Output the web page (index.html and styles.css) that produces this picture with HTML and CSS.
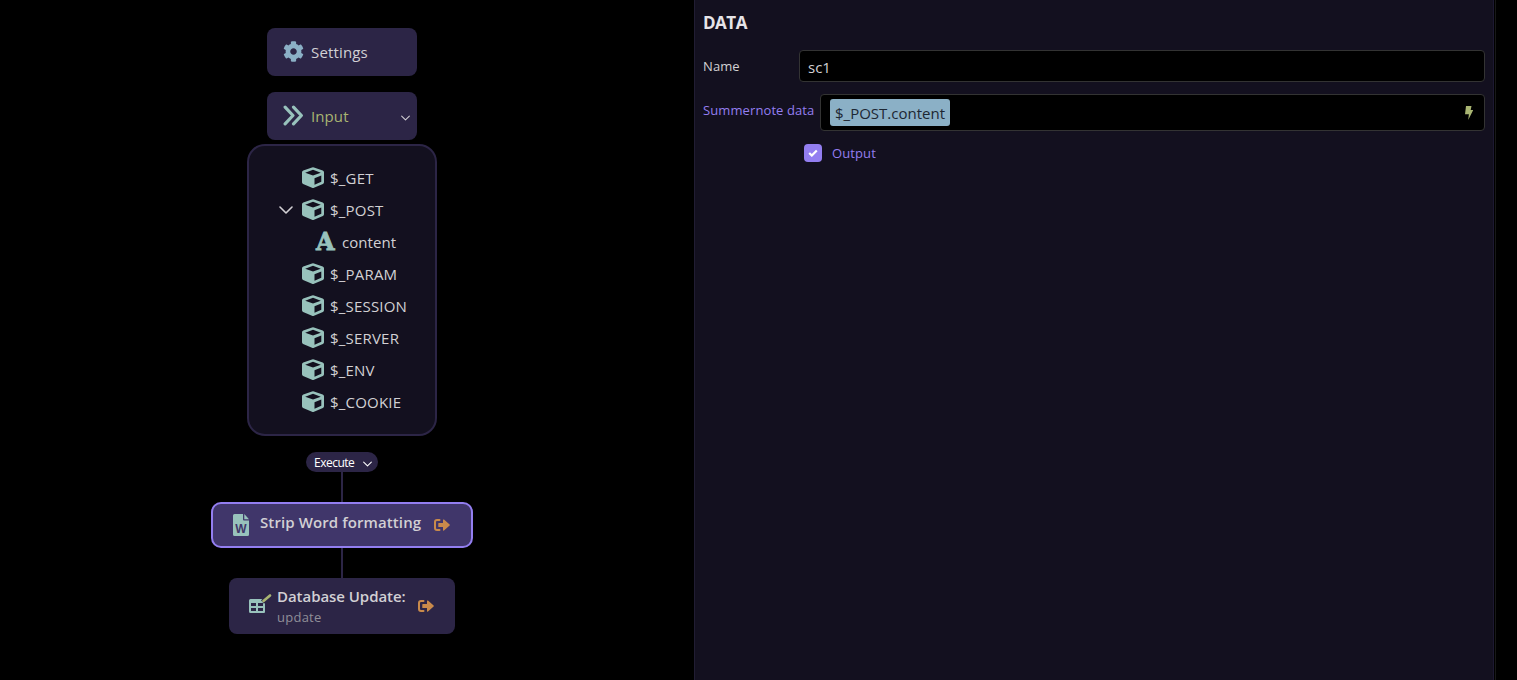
FILE: index.html
```html
<!DOCTYPE html>
<html lang="en">
<head>
  <meta charset="UTF-8">
  <title>Server Action</title>
  <link rel="stylesheet" href="styles.css">
</head>
<body>

<svg class="defs">
  <symbol id="cube" viewBox="0 0 22 22" preserveAspectRatio="none">
    <path fill-rule="evenodd" d="M10 .4Q11 0 12 .4L20.700 3.600Q22 4.100 22 5.400V16Q22 17.200 20.900 17.700L12 21.700Q11 22.100 10 21.700L1.100 17.700Q0 17.200 0 16V5.400Q0 4.100 1.300 3.600ZM11 3L3.200 5.900L11 9L18.800 5.900ZM12.500 11.700V18.500L19.300 15.400V9Z"/>
  </symbol>
  <symbol id="chevron" viewBox="0 0 14 8">
    <path d="M1 1L7 7L13 1" fill="none" stroke="currentColor" stroke-width="1.600" stroke-linecap="round" stroke-linejoin="round"/>
  </symbol>
  <symbol id="output" viewBox="0 0 16 12">
    <path d="M5.500 1H3Q1 1 1 3V9Q1 11 3 11H5.500" fill="none" stroke="currentColor" stroke-width="2" stroke-linecap="round"/>
    <path d="M4.800 4H9V1Q9 0 10 .6L15.600 5.400Q16.200 6 15.600 6.600L10 11.400Q9 12 9 11V8H4.800Q4.300 8 4.300 7.500V4.500Q4.300 4 4.800 4Z"/>
  </symbol>
</svg>

<div class="app">
  <main class="flow">
    <div class="box">
      <svg class="icon cog" viewBox="0 0 512 512"><path d="M487.400 315.700l-42.600-24.600c4.300-23.200 4.300-47 0-70.200l42.600-24.600c4.900-2.800 7.100-8.600 5.500-14-11.100-35.600-30-67.800-54.700-94.600-3.800-4.100-10-5.100-14.800-2.300L380.800 110c-17.900-15.400-38.500-27.300-60.800-35.100V25.800c0-5.600-3.900-10.500-9.400-11.700-36.700-8.200-74.300-7.800-109.200 0-5.500 1.200-9.400 6.100-9.400 11.700V75c-22.200 7.900-42.800 19.800-60.800 35.100L88.700 85.500c-4.900-2.800-11-1.900-14.800 2.300-24.700 26.700-43.600 58.900-54.700 94.600-1.700 5.400.6 11.200 5.500 14L67.300 221c-4.300 23.200-4.300 47 0 70.200l-42.600 24.600c-4.900 2.800-7.100 8.600-5.500 14 11.100 35.600 30 67.800 54.700 94.600 3.800 4.100 10 5.100 14.800 2.300l42.600-24.600c17.900 15.400 38.500 27.300 60.800 35.100v49.200c0 5.600 3.900 10.500 9.400 11.700 36.700 8.200 74.300 7.800 109.200 0 5.500-1.200 9.400-6.100 9.400-11.700v-49.200c22.200-7.900 42.800-19.800 60.800-35.100l42.600 24.600c4.900 2.800 11 1.900 14.800-2.300 24.700-26.700 43.600-58.900 54.700-94.600 1.500-5.500-.7-11.300-5.600-14.100zM256 336c-44.100 0-80-35.900-80-80s35.900-80 80-80 80 35.900 80 80-35.900 80-80 80z"/></svg>
      <span class="settings">Settings</span>
    </div>

    <div class="box input-box">
      <svg class="icon arrows" viewBox="0 0 20 20"><path d="M2 2L9.500 10L2 18M10 2L17.500 10L10 18" fill="none" stroke="currentColor" stroke-width="3" stroke-linecap="round" stroke-linejoin="round"/></svg>
      <span class="input">Input</span>
      <svg class="small-chevron"><use href="#chevron"/></svg>
    </div>

    <ul class="tree">
      <li><svg class="cube"><use href="#cube"/></svg><span>$_GET</span></li>
      <li class="open"><svg class="toggle"><use href="#chevron"/></svg><svg class="cube"><use href="#cube"/></svg><span>$_POST</span></li>
      <li class="child"><b class="type">A</b><span>content</span></li>
      <li><svg class="cube"><use href="#cube"/></svg><span>$_PARAM</span></li>
      <li><svg class="cube"><use href="#cube"/></svg><span>$_SESSION</span></li>
      <li><svg class="cube"><use href="#cube"/></svg><span>$_SERVER</span></li>
      <li><svg class="cube"><use href="#cube"/></svg><span>$_ENV</span></li>
      <li><svg class="cube"><use href="#cube"/></svg><span>$_COOKIE</span></li>
    </ul>

    <div class="execute"><span>Execute</span><svg class="small-chevron"><use href="#chevron"/></svg></div>
    <div class="line"></div>

    <div class="step strip selected">
      <svg class="file" viewBox="0 0 16 22">
        <path d="M1.500 0H10V5.500Q10 6.500 11 6.500H16V20.500Q16 22 14.500 22H1.500Q0 22 0 20.500V1.500Q0 0 1.500 0ZM11.300 0L16 5.200H11.300Z"/>
        <text x="8" y="18.500" text-anchor="middle">W</text>
      </svg>
      <span class="title">Strip Word formatting</span>
      <svg class="output"><use href="#output"/></svg>
    </div>
    <div class="line"></div>

    <div class="step update">
      <svg class="table" viewBox="0 0 23 20">
        <path fill-rule="evenodd" d="M1.500 5H15Q16 5 16 6V18Q16 19 15 19H1.500Q0 19 0 17.500V6.500Q0 5 1.500 5ZM2 9V12H7V9ZM9 9V12H14V9ZM2 14V17H7V14ZM9 14V17H14V14Z"/>
        <path class="pencil-edge" d="M13.500 8L21 1.500"/>
        <path class="pencil" d="M14.500 7L21 1.500"/>
      </svg>
      <div class="text">
        <span class="title">Database Update:</span>
        <span class="sub">update</span>
      </div>
      <svg class="output"><use href="#output"/></svg>
    </div>
  </main>

  <aside class="panel">
    <h2>DATA</h2>
    <div class="row">
      <label>Name</label>
      <div class="field"><span>sc1</span></div>
    </div>
    <div class="row data-row">
      <label class="bound">Summernote data</label>
      <div class="field">
        <span class="tag">$_POST.content</span>
        <svg class="bolt" viewBox="0 0 8 14"><path d="M1 0H6.500L5.700 4H8.300L3.200 14L3.900 8.200H0Z"/></svg>
      </div>
    </div>
    <div class="check-row">
      <span class="check"><svg viewBox="0 0 10 8"><path d="M1.200 4L3.800 6.500L8.800 1.500" fill="none" stroke="#fff" stroke-width="2.200"/></svg></span>
      <span class="check-label">Output</span>
    </div>
  </aside>
  <div class="edge"></div>
</div>

</body>
</html>
```
FILE: styles.css
```css
* {
  box-sizing: border-box;
}
body {
  margin: 0;
  background: #000;
  color: #d2d0d4;
  font-family: "Open Sans", "Noto Sans", sans-serif;
  font-size: 15px;
  overflow: hidden;
}
svg {
  display: block;
  flex: none;
  fill: currentColor;
}
span {
  white-space: nowrap;
}
.defs {
  display: none;
}
.app {
  display: flex;
  height: 680px;
}

/* action flow */
.flow {
  width: 694px;
  padding: 28px 10px 0 0;
  display: flex;
  flex-direction: column;
  align-items: center;
}
.box {
  width: 150px;
  height: 48px;
  margin-bottom: 16px;
  padding: 0 7px 0 16px;
  display: flex;
  align-items: center;
  background: #2c2546;
  border-radius: 8px;
}
.input-box {
  margin-bottom: 4px;
}
.icon {
  width: 21px;
  height: 21px;
  margin-right: 7px;
  margin-top: -1px;
}
.cog {
  color: #8bb0c6;
}
.arrows {
  color: #98c2bc;
}
.settings {
  letter-spacing: 0.15px;
}
.input {
  color: #a9b572;
  letter-spacing: 0.1px;
}
.small-chevron {
  width: 9px;
  height: 6px;
  margin-left: auto;
  margin-top: 3px;
}
.tree {
  width: 190px;
  height: 292px;
  margin: 0 0 16px;
  padding: 16px 0;
  list-style: none;
  background: #13101f;
  border: 2px solid #2c2546;
  border-radius: 18px;
}
.tree li {
  height: 32px;
  padding-left: 53px;
  display: flex;
  align-items: center;
  letter-spacing: 0.2px;
}
.tree .open {
  padding-left: 30px;
}
.tree .child {
  padding-left: 67px;
  letter-spacing: 0.05px;
}
.toggle {
  width: 14px;
  height: 8px;
  margin-right: 9px;
}
.cube {
  width: 22px;
  height: 21px;
  margin-right: 6px;
  margin-top: -1px;
  color: #98c2bc;
}
.type {
  width: 19px;
  margin-right: 7px;
  color: #98c2bc;
  font: bold 24px/32px "DejaVu Serif", serif;
  -webkit-text-stroke: 0.8px #98c2bc;
}
.execute {
  width: 72px;
  height: 20px;
  padding: 0 6px 0 8px;
  display: flex;
  align-items: center;
  background: #2c2546;
  border-radius: 10px;
  color: #fff;
  font-size: 12px;
  letter-spacing: -0.5px;
}
.line {
  width: 2px;
  height: 30px;
  background: #2c2546;
}
.step {
  display: flex;
  align-items: center;
  background: #2c2546;
  border-radius: 8px;
}
.strip {
  width: 262px;
  height: 46px;
  padding-left: 20px;
}
.selected {
  background: #40366a;
  border: 2px solid #937ef0;
  border-radius: 10px;
}
.file {
  width: 16px;
  height: 22px;
  margin-right: 11px;
  color: #98c2bc;
}
.file text {
  fill: #40366a;
  font: bold 12px "Liberation Sans", sans-serif;
}
.title {
  font-weight: 600;
  line-height: 22px;
}
.strip .title {
  margin-top: -7px;
  letter-spacing: 0.1px;
}
.output {
  width: 16px;
  height: 12px;
  color: #c98a4b;
}
.strip .output {
  margin-left: 13px;
}
.update {
  width: 226px;
  height: 56px;
  padding-left: 20px;
}
.update .title {
  margin-top: -2px;
  margin-bottom: 1px;
  letter-spacing: -0.05px;
}
.update .output {
  margin-left: 12px;
}
.table {
  width: 23px;
  height: 20px;
  margin: -4px 5px 0 0;
  color: #98c2bc;
}
.pencil-edge {
  stroke: #2c2546;
  stroke-width: 4.5;
}
.pencil {
  stroke: #a9b572;
  stroke-width: 2.6;
  stroke-linecap: round;
}
.text {
  display: flex;
  flex-direction: column;
}
.sub {
  color: #908e98;
  font-size: 13px;
  line-height: 18px;
  letter-spacing: 0.25px;
}

/* properties */
.panel {
  width: 800px;
  padding: 12px 8px 0;
  background: #13101f;
  border-left: 1px solid #211d33;
  border-right: 1px solid #1d1932;
}
h2 {
  margin: 0 0 16px;
  font-size: 17px;
  font-weight: 700;
  line-height: 22px;
  letter-spacing: -0.5px;
  color: #e6e4e8;
}
.row {
  display: flex;
  margin-bottom: 12px;
}
label,
.check-label {
  font-size: 13px;
  line-height: 18px;
  letter-spacing: 0.1px;
}
label {
  width: 96px;
  margin-top: 7px;
}
.field {
  flex: 1;
  height: 32px;
  padding: 2px 8px 0;
  display: flex;
  align-items: center;
  background: #000;
  border: 1px solid #333;
  border-radius: 4px;
}
.bound {
  width: 117px;
}
.bound,
.check-label {
  color: #937ef0;
}
.data-row .field {
  height: 37px;
  padding: 0 11px 0 9px;
  justify-content: space-between;
}
.tag {
  width: 120px;
  height: 27px;
  padding-left: 5px;
  background: #8bb0c6;
  border-radius: 3px;
  color: #1d2733;
  line-height: 29px;
}
.bolt {
  width: 8px;
  height: 14px;
  color: #a9b572;
}
.check-row {
  display: flex;
  align-items: center;
  margin: 13px 0 0 101px;
}
.check {
  width: 18px;
  height: 18px;
  margin-right: 10px;
  padding: 5px 4px;
  background: #937ef0;
  border-radius: 4px;
}
.edge {
  width: 1px;
  margin-left: 1px;
  background: #181818;
}
```
